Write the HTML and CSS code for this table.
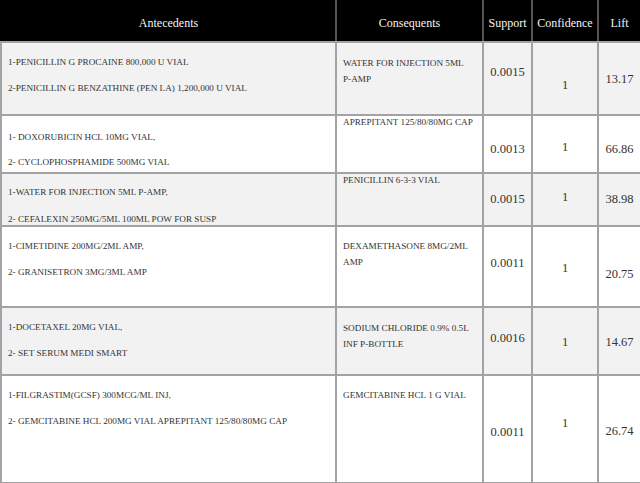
FILE: index.html
```html
<!DOCTYPE html>
<html>
<head>
<meta charset="utf-8">
<link rel="stylesheet" href="styles.css">
</head>
<body>
<table class="rules">
  <colgroup>
    <col class="c-ant"><col class="c-con"><col class="c-sup"><col class="c-conf"><col class="c-lift">
  </colgroup>
  <thead>
    <tr class="head">
      <th><div class="hd">Antecedents</div></th><th><div class="hd">Consequents</div></th><th><div class="hd">Support</div></th><th><div class="hd">Confidence</div></th><th><div class="hd">Lift</div></th>
    </tr>
  </thead>
  <tbody>
    <tr class="r1 shade">
      <td><div class="ant"><p>1-PENICILLIN G PROCAINE 800,000 U VIAL</p><p>2-PENICILLIN G BENZATHINE (PEN LA) 1,200,000 U VIAL</p></div></td>
      <td><div class="con p12">WATER FOR INJECTION 5ML<br>P-AMP</div></td>
      <td><div class="num p21">0.0015</div></td>
      <td><div class="num p34">1</div></td>
      <td><div class="num p28">13.17</div></td>
    </tr>
    <tr class="r2">
      <td><div class="ant a-low"><p>1- DOXORUBICIN HCL 10MG VIAL,</p><p>2- CYCLOPHOSPHAMIDE 500MG VIAL</p></div></td>
      <td><div class="con top">APREPITANT 125/80/80MG CAP</div></td>
      <td><div class="num p25">0.0013</div></td>
      <td><div class="num p23">1</div></td>
      <td><div class="num p25">66.86</div></td>
    </tr>
    <tr class="r3 shade">
      <td><div class="ant a-tight"><p>1-WATER FOR INJECTION 5ML P-AMP,</p><p>2- CEFALEXIN 250MG/5ML 100ML POW FOR SUSP</p></div></td>
      <td><div class="con top">PENICILLIN 6-3-3 VIAL</div></td>
      <td><div class="num p17">0.0015</div></td>
      <td><div class="num p15">1</div></td>
      <td><div class="num p17">38.98</div></td>
    </tr>
    <tr class="r4">
      <td><div class="ant"><p>1-CIMETIDINE 200MG/2ML AMP,</p><p>2- GRANISETRON 3MG/3ML AMP</p></div></td>
      <td><div class="con p11">DEXAMETHASONE 8MG/2ML<br>AMP</div></td>
      <td><div class="num p28">0.0011</div></td>
      <td><div class="num p33">1</div></td>
      <td><div class="num p39">20.75</div></td>
    </tr>
    <tr class="r5 shade">
      <td><div class="ant"><p>1-DOCETAXEL 20MG VIAL,</p><p>2- SET SERUM MEDI SMART</p></div></td>
      <td><div class="con p12">SODIUM CHLORIDE 0.9% 0.5L<br>INF P-BOTTLE</div></td>
      <td><div class="num p22">0.0016</div></td>
      <td><div class="num p26">1</div></td>
      <td><div class="num p26">14.67</div></td>
    </tr>
    <tr class="r6">
      <td><div class="ant"><p>1-FILGRASTIM(GCSF) 300MCG/ML INJ,</p><p>2- GEMCITABINE HCL 200MG VIAL APREPITANT 125/80/80MG CAP</p></div></td>
      <td><div class="con p11">GEMCITABINE HCL 1 G VIAL</div></td>
      <td><div class="num p48">0.0011</div></td>
      <td><div class="num p39">1</div></td>
      <td><div class="num p47">26.74</div></td>
    </tr>
  </tbody>
</table>
</body>
</html>
```

FILE: styles.css
```css
html, body {
  margin: 0;
  padding: 0;
  background: #ffffff;
}
body {
  font-family: "Liberation Serif", "DejaVu Serif", serif;
  color: #333333;
  width: 640px;
  height: 483px;
  overflow: hidden;
}
.rules {
  width: 640px;
  table-layout: fixed;
  border-collapse: collapse;
  font-family: "Liberation Serif", "DejaVu Serif", serif;
}
.c-ant { width: 335px; }
.c-con { width: 147px; }
.c-sup { width: 49px; }
.c-conf { width: 66px; }
.c-lift { width: 43px; }

.rules th, .rules td {
  border: 2px solid #a3a3a3;
  padding: 0;
}
.head th {
  background: #000000;
  color: #f4f4f4;
  font-weight: normal;
  font-size: 12px;
  height: 41px;
  vertical-align: middle;
  text-align: center;
  border-top: none;
  border-color: #000000 #555555 #a3a3a3 #555555;
}
.head th:first-child { border-left-color: #000000; }
.head th:last-child { border-right-color: #000000; }
.hd {
  padding-top: 5px;
}
.rules td {
  vertical-align: top;
}
.shade td { background: #f2f2f2; }

.r1 td { height: 71px; }
.r2 td { height: 56px; }
.r3 td { height: 51px; }
.r4 td { height: 79px; }
.r5 td { height: 66px; }
.r6 td { height: 106px; }

.ant {
  font-size: 9.2px;
  line-height: 12px;
  padding: 13px 0 0 6px;
  white-space: nowrap;
}
.ant p {
  margin: 0 0 14px 0;
}
.ant p:last-child { margin-bottom: 0; }
.a-low { padding-top: 15px; }
.a-low p { margin-bottom: 13px; }
.a-tight { padding-top: 12px; }
.a-tight p { margin-bottom: 15px; }
.con {
  font-size: 9.2px;
  line-height: 16px;
  padding-left: 6px;
  white-space: nowrap;
}
.con.top {
  line-height: 12px;
  padding-top: 0;
}
.num {
  font-size: 12.5px;
  line-height: 16px;
  text-align: center;
}
.p11 { padding-top: 11px; }
.p12 { padding-top: 12px; }
.p15 { padding-top: 15px; }
.p17 { padding-top: 17px; }
.p21 { padding-top: 21px; }
.p22 { padding-top: 22px; }
.p23 { padding-top: 23px; }
.p25 { padding-top: 25px; }
.p26 { padding-top: 26px; }
.p28 { padding-top: 28px; }
.p33 { padding-top: 33px; }
.p34 { padding-top: 34px; }
.p39 { padding-top: 39px; }
.p47 { padding-top: 47px; }
.p48 { padding-top: 48px; }
```
